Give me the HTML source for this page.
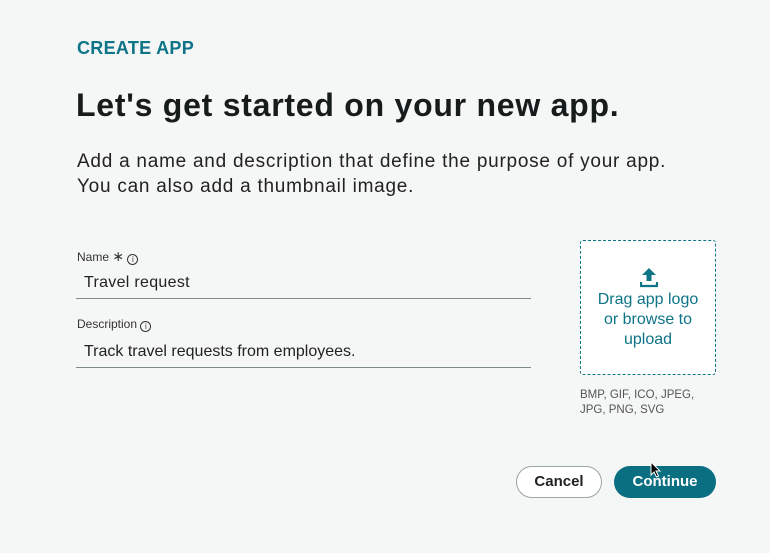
<!DOCTYPE html>
<html><head><style>
body{margin:0;width:770px;height:553px;background:#f5f6f6;font-family:"Liberation Sans",sans-serif;position:relative;overflow:hidden;color:#161b1c}
.a{position:absolute;white-space:nowrap}
.teal{color:#0e7488}
</style></head><body>
<div class="a teal" style="left:77px;top:38px;font-size:18px;font-weight:bold;letter-spacing:0.3px">CREATE APP</div>
<div class="a" style="left:76px;top:87px;font-size:32px;font-weight:bold;letter-spacing:0.75px">Let's get started on your new app.</div>
<div class="a" style="left:77px;top:149px;font-size:19px;line-height:25px;color:#222;letter-spacing:0.75px">Add a name and description that define the purpose of your app.<br>You can also add a thumbnail image.</div>
<div class="a" style="left:77px;top:248px;font-size:12px;color:#333">Name <span style="font-size:14px">∗</span> <span style="display:inline-block;width:9px;height:9px;border:1px solid #333;border-radius:50%;font-size:8px;line-height:9px;text-align:center;vertical-align:-1px">i</span></div>
<div class="a" style="left:84px;top:274px;font-size:16px;color:#222;letter-spacing:0.3px">Travel request</div>
<div class="a" style="left:76px;top:298px;width:455px;height:1px;background:#7f8a8c"></div>
<div class="a" style="left:77px;top:317px;font-size:12px;color:#333">Description <span style="display:inline-block;width:9px;height:9px;border:1px solid #333;border-radius:50%;font-size:8px;line-height:9px;text-align:center;vertical-align:-1px">i</span></div>
<div class="a" style="left:84px;top:343px;font-size:16px;color:#222">Track travel requests from employees.</div>
<div class="a" style="left:76px;top:367px;width:455px;height:1px;background:#7f8a8c"></div>
<div class="a" style="left:580px;top:240px;width:134px;height:133px;border:1px dashed #0e7488;border-radius:3px;background:#fff"></div>
<svg class="a" style="left:640px;top:268px" width="18" height="20" viewBox="0 0 18 20"><path d="M9 0L2 7h4.5v6h5V7H16z" fill="#0e7488"/><path d="M1 14v4h16v-4" stroke="#0e7488" stroke-width="2.2" fill="none"/></svg>
<div class="a teal" style="left:581px;top:290px;width:134px;text-align:center;font-size:16px;line-height:20px;white-space:normal">Drag app logo<br>or browse to<br>upload</div>
<div class="a" style="left:580px;top:388px;font-size:11.5px;line-height:15px;color:#555">BMP, GIF, ICO, JPEG,<br>JPG, PNG, SVG</div>
<div class="a" style="left:516px;top:466px;width:84px;height:30px;border:1px solid #9aa3a5;border-radius:16px;background:#fff;text-align:center;line-height:30px;font-size:15px;font-weight:bold;color:#222">Cancel</div>
<div class="a" style="left:614px;top:466px;width:102px;height:32px;border-radius:16px;background:#0b6f82;text-align:center;line-height:32px;font-size:15px;font-weight:bold;color:#fff">Continue</div>
<svg class="a" style="left:650px;top:461px" width="12" height="18" viewBox="0 0 12 18"><path d="M1 1v13l3-3 2.5 5 2-1-2.5-5H10z" fill="#000" stroke="#fff" stroke-width="1"/></svg>
</body></html>
